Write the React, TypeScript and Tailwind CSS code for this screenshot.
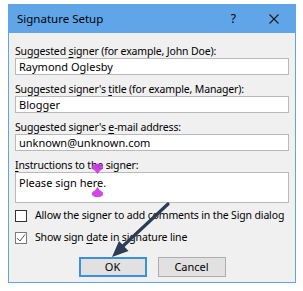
function Label({ pre, u, post }: { pre: string; u: string; post: string }) {
  return (
    <div className="h-[12px] leading-[12px] mt-[8px] text-[10.5px] tracking-[-0.15px] text-black whitespace-nowrap">
      {pre}
      <span className="underline underline-offset-2">{u}</span>
      {post}
    </div>
  );
}

function Field({ value }: { value: string }) {
  return (
    <div className="mt-[1px] h-[17px] border border-[#b9b9b9] bg-white pl-[3px] text-[11px] leading-[15px] text-black">
      {value}
    </div>
  );
}

function Handle({ flip, className }: { flip?: boolean; className: string }) {
  return (
    <svg
      width="13"
      height="11"
      viewBox="0 0 13 11"
      className={`absolute ${flip ? "rotate-180" : ""} ${className}`}
    >
      <path
        d="M6.5 0 Q8 3 11.5 5 Q13 7 11 9 Q6.5 11.5 2 9 Q0 7 1.5 5 Q5 3 6.5 0Z"
        fill="#c935e3"
        opacity="0.9"
      />
    </svg>
  );
}

export default function App() {
  return (
    <div
      className="relative w-[303px] h-[291px] bg-white pt-[4px] pl-[8px]"
      style={{ fontFamily: '"Noto Sans", "Open Sans", sans-serif' }}
    >
      <div className="w-[288px] h-[279px] border border-[#5fa5e8] bg-[#f0f0f0] flex flex-col">
        <div className="h-[28px] bg-[#5fa5e8] flex items-center pl-[8px] pr-[16px] text-[11.5px] text-black">
          <span className="flex-1">Signature Setup</span>
          <span className="mr-[33px] text-[12px]">?</span>
          <svg width="10" height="10" viewBox="0 0 10 10">
            <path d="M0.5 0.5 L9.5 9.5 M9.5 0.5 L0.5 9.5" stroke="#1a1a1a" strokeWidth="1.1" />
          </svg>
        </div>
        <div className="px-[6px] pt-[4px] flex flex-col">
          <Label pre="Suggested " u="s" post="igner (for example, John Doe):" />
          <Field value="Raymond Oglesby" />
          <Label pre="Suggested signer's " u="t" post="itle (for example, Manager):" />
          <Field value="Blogger" />
          <Label pre="Suggested signer's " u="e" post="-mail address:" />
          <Field value="unknown@unknown.com" />
          <Label pre="" u="I" post="nstructions to the signer:" />
          <div className="mt-[1px] h-[31px] border border-[#b9b9b9] bg-white pl-[3px] pt-[2px] text-[11px] leading-[15px] text-black">
            Please sign here.
          </div>
          <div className="mt-[7px] flex items-center h-[12px] text-[10.5px] tracking-[-0.15px] whitespace-nowrap">
            <div className="shrink-0 w-[12px] h-[12px] border border-[#333333] bg-white" />
            <span className="ml-[8px]">Allow the signer to add comments in the Sign dialog</span>
          </div>
          <div className="mt-[10px] flex items-center h-[12px] text-[10.5px] tracking-[-0.15px] whitespace-nowrap">
            <div className="shrink-0 w-[12px] h-[12px] border border-[#7a7a7a] bg-white flex items-center justify-center">
              <svg width="10" height="10" viewBox="0 0 10 10">
                <path d="M1 5 L4 8 L9 1.5" fill="none" stroke="#555" strokeWidth="1" />
              </svg>
            </div>
            <span className="ml-[8px]">
              Show sign <span className="underline underline-offset-2">d</span>ate in signature line
            </span>
          </div>
          <div className="mt-[13px] flex justify-center gap-[11px]">
            <button className="w-[68px] h-[20px] border-2 border-[#3d8fdc] bg-[#e1e1e1] text-[11px] leading-[16px]">
              OK
            </button>
            <button className="w-[68px] h-[20px] border border-[#adadad] bg-[#e1e1e1] text-[11px] leading-[18px]">
              Cancel
            </button>
          </div>
        </div>
      </div>

      <Handle flip className="left-[91px] top-[163px]" />
      <Handle className="left-[91px] top-[187px]" />

      <svg className="absolute left-0 top-0" width="303" height="291" viewBox="0 0 303 291">
        <line x1="168" y1="204" x2="122" y2="247" stroke="#2b3c54" strokeWidth="3.2" strokeLinecap="round" />
        <polygon points="112,257 128.5,251 119,241" fill="#2b3c54" />
      </svg>
    </div>
  );
}
